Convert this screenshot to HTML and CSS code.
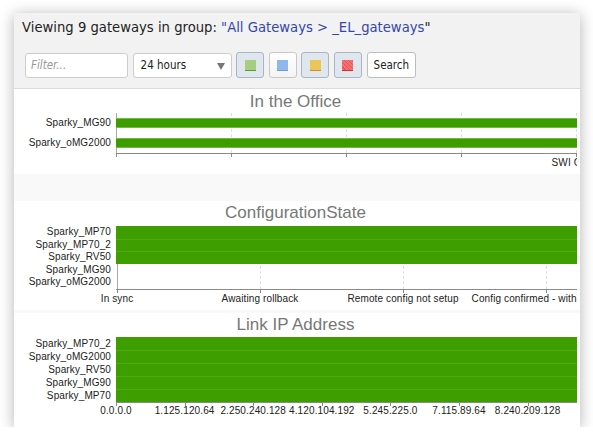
FILE: index.html
```html
<!DOCTYPE html>
<html lang="en">
  <head>
    <meta charset="UTF-8" />
    <meta name="viewport" content="width=device-width, initial-scale=1.0" />
    <title>Gateways</title>
    <link rel="stylesheet" href="styles.css">
  </head>
  <body>
    <div class="panel">
      <div class="panel-head">
        <div class="head-title">Viewing 9 gateways in group: <a class="group-link">"All Gateways &gt; _EL_gateways</a>"</div>
        <div class="toolbar">
          <input class="filter" type="text" placeholder="Filter..." />
          <div class="range">24 hours</div>
          <button class="swatch-btn on"><span class="swatch sw-green"></span></button>
          <button class="swatch-btn"><span class="swatch sw-blue"></span></button>
          <button class="swatch-btn on"><span class="swatch sw-yellow"></span></button>
          <button class="swatch-btn on"><span class="swatch sw-red"></span></button>
          <button class="search-btn">Search</button>
        </div>
      </div>

      <div class="charts">
        <section class="chart chart-office">
          <h3 class="chart-title">In the Office</h3>
          <div class="chart-clip">
            <div class="chart-body">
              <ul class="y-labels">
                <li>Sparky_MG90</li>
                <li>Sparky_oMG2000</li>
              </ul>
              <div class="plot">
                <span class="grid first" style="left:0px"></span>
                <span class="grid" style="left:115px"></span>
                <span class="grid" style="left:230px"></span>
                <span class="grid" style="left:345px"></span>
                <span class="grid" style="left:460px"></span>
                <div class="row"><div class="bar"></div></div>
                <div class="row"><div class="bar"></div></div>
              </div>
            </div>
            <div class="x-labels">
              <span style="left:460px">SWI Cloud</span>
            </div>
          </div>
        </section>

        <section class="chart chart-config">
          <h3 class="chart-title">ConfigurationState</h3>
          <div class="chart-clip">
            <div class="chart-body">
              <ul class="y-labels">
                <li>Sparky_MP70</li>
                <li>Sparky_MP70_2</li>
                <li>Sparky_RV50</li>
                <li>Sparky_MG90</li>
                <li>Sparky_oMG2000</li>
              </ul>
              <div class="plot">
                <span class="grid first" style="left:1px"></span>
                <span class="grid" style="left:144px"></span>
                <span class="grid" style="left:287px"></span>
                <span class="grid" style="left:430px"></span>
                <div class="row fill"></div>
                <div class="row fill"></div>
                <div class="row fill"></div>
                <div class="row"></div>
                <div class="row"></div>
              </div>
            </div>
            <div class="x-labels">
              <span style="left:1px">In sync</span>
              <span style="left:144px">Awaiting rollback</span>
              <span style="left:287px">Remote config not setup</span>
              <span style="left:430px">Config confirmed - with warnings</span>
            </div>
          </div>
        </section>

        <section class="chart chart-ip">
          <h3 class="chart-title">Link IP Address</h3>
          <div class="chart-clip">
            <div class="chart-body">
              <ul class="y-labels">
                <li>Sparky_MP70_2</li>
                <li>Sparky_oMG2000</li>
                <li>Sparky_RV50</li>
                <li>Sparky_MG90</li>
                <li>Sparky_MP70</li>
              </ul>
              <div class="plot">
                <span class="grid first" style="left:0px"></span>
                <span class="grid" style="left:68.6px"></span>
                <span class="grid" style="left:137.2px"></span>
                <span class="grid" style="left:205.8px"></span>
                <span class="grid" style="left:274.4px"></span>
                <span class="grid" style="left:343px"></span>
                <span class="grid" style="left:411.6px"></span>
                <div class="row fill"></div>
                <div class="row fill"></div>
                <div class="row fill"></div>
                <div class="row fill"></div>
                <div class="row fill"></div>
              </div>
            </div>
            <div class="x-labels">
              <span style="left:0px">0.0.0.0</span>
              <span style="left:68.6px">1.125.120.64</span>
              <span style="left:137.2px">2.250.240.128</span>
              <span style="left:205.8px">4.120.104.192</span>
              <span style="left:274.4px">5.245.225.0</span>
              <span style="left:343px">7.115.89.64</span>
              <span style="left:411.6px">8.240.209.128</span>
            </div>
          </div>
        </section>
      </div>
    </div>
  </body>
</html>
```

FILE: styles.css
```css
body {
  margin: 0;
  background-color: #fff;
  font-family: "DejaVu Sans", Verdana, sans-serif;
  color: #222;
}
.panel {
  width: 566px;
  height: 414px;
  margin: 13px 0 0 14px;
  background-color: #f9f9f9;
  box-shadow: 0 2px 14px rgba(0, 0, 0, 0.3);
  overflow: hidden;
}

/* header */
.panel-head {
  height: 76px;
  box-sizing: border-box;
  padding: 7px 0 0 8px;
  background-color: #f2f2f2;
  border-bottom: 1px solid #dcdcdc;
}
.head-title {
  font-size: 13.2px;
  line-height: 16px;
}
.group-link {
  color: #3446b0;
  text-decoration: none;
}
.toolbar {
  display: flex;
  align-items: center;
  gap: 4.6px;
  margin: 16px 0 0 3px;
  font-family: "DejaVu Sans Condensed", "Liberation Sans", sans-serif;
  font-size: 11.5px;
}
.filter {
  width: 103px;
  height: 25px;
  box-sizing: border-box;
  padding: 0 5px;
  border: 1px solid #cdcdcd;
  border-radius: 3px;
  font: inherit;
  color: #222;
}
.filter::placeholder {
  font-style: italic;
  color: #999;
}
.range {
  position: relative;
  width: 99px;
  height: 25px;
  box-sizing: border-box;
  padding-left: 7px;
  line-height: 23px;
  border: 1px solid #cdcdcd;
  border-radius: 3px;
  background-color: #fff;
}
.range::after {
  content: "";
  position: absolute;
  right: 6px;
  top: 9px;
  border-left: 4.5px solid transparent;
  border-right: 4.5px solid transparent;
  border-top: 7px solid #777;
}
.swatch-btn {
  width: 28px;
  height: 26px;
  padding: 0;
  display: flex;
  align-items: center;
  justify-content: center;
  border: 1px solid #c8c8c8;
  border-radius: 3px;
  background: linear-gradient(#fff, #f3f3f3);
}
.swatch-btn.on {
  background: #dfe6ee;
  border-color: #a9b5c4;
}
.swatch {
  width: 11px;
  height: 11px;
  box-sizing: border-box;
}
.sw-green {
  background-color: #a6cd80;
  border-bottom: 1px solid #5c9d30;
}
.sw-blue {
  background-color: #8fb7ee;
  border-bottom: 1px solid #6c9be0;
}
.sw-yellow {
  background-color: #e8c65a;
  border-bottom: 1px solid #e0862a;
}
.sw-red {
  background: repeating-linear-gradient(45deg, #f37070 0 2px, #ea5454 2px 3px);
  border-bottom: 1px solid #d82e2e;
}
.search-btn {
  height: 26px;
  padding: 0 6px;
  border: 1px solid #bdbdbd;
  border-radius: 3px;
  background-color: #fff;
  font: inherit;
  color: #222;
}

/* charts */
.chart {
  box-sizing: border-box;
  padding-right: 3px;
  background-color: #fff;
}
.chart-office {
  height: 85px;
  padding-top: 3px;
}
.chart-config {
  height: 109px;
  margin-top: 27px;
  padding-top: 2px;
}
.chart-ip {
  height: 114px;
  margin-top: 3px;
  padding-top: 2px;
}
.chart-title {
  margin: 0;
  font-family: "Liberation Sans", Arial, sans-serif;
  font-size: 17px;
  font-weight: normal;
  line-height: 20px;
  text-align: center;
  color: #777;
}
.chart-clip {
  overflow: hidden;
}
.chart-body {
  display: flex;
  margin-top: 1px;
}
.chart-config .chart-body {
  margin-top: 3px;
}
.chart-ip .chart-body {
  margin-top: 2px;
}
.y-labels,
.x-labels {
  font-family: "Liberation Sans", Arial, sans-serif;
  font-size: 10px;
  letter-spacing: 0.12px;
  color: #222;
}
.y-labels {
  width: 102px;
  flex: none;
  box-sizing: border-box;
  margin: 0;
  padding: 0 5px 0 0;
  list-style: none;
  text-align: right;
}
.y-labels li {
  height: 20px;
  line-height: 20px;
}
.chart-config .y-labels li {
  height: 12.6px;
  line-height: 12.6px;
}
.chart-ip .y-labels li {
  height: 13px;
  line-height: 13px;
}
.plot {
  position: relative;
  flex: 1;
  display: flex;
  flex-direction: column;
  height: 40px;
  border-bottom: 1px solid #8a8a8a;
}
.chart-config .plot {
  height: 63px;
}
.chart-ip .plot {
  height: 65px;
}
.grid {
  position: absolute;
  top: 0;
  height: 100%;
  border-left: 1px dashed #dedede;
}
.grid.first {
  border-left: 1px solid #a8a8a8;
}
.grid::after {
  content: "";
  position: absolute;
  left: -1px;
  top: 100%;
  height: 4px;
  border-left: 1px solid #8a8a8a;
}
.row {
  position: relative;
  flex: 1;
}
.bar {
  height: 10px;
  margin-top: 5px;
  background-color: #3d9d00;
  box-shadow: inset 0 1px #6fbb45, inset 0 -1px #6fbb45;
}
.row.fill {
  background-color: #3e9e00;
}
.row.fill + .row.fill {
  box-shadow: inset 0 1px #4dab12;
}
.x-labels {
  position: relative;
  height: 12px;
  margin: 3px 0 0 102px;
  line-height: 12px;
}
.x-labels span {
  position: absolute;
  top: 0;
  white-space: nowrap;
  transform: translateX(-50%);
}
.chart-ip .x-labels {
  margin-top: 2px;
}
```
